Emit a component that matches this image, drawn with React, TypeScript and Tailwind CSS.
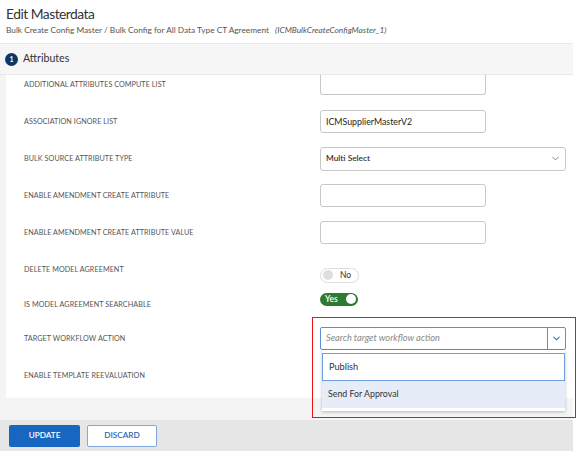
import { ChevronDown } from "lucide-react";

const FONT = "font-['Lato','Liberation_Sans',sans-serif]";

function TextBox({ value, clipTop }: { value?: string; clipTop?: boolean }) {
  return (
    <div
      className={
        "w-[166px] bg-white border border-[#c8c8c8] flex items-center px-[5px] text-[8.8px] text-[#222] " +
        (clipTop ? "h-[20px] border-t-0 rounded-b-[3px]" : "h-[23px] rounded-[3px]")
      }
    >
      {value}
    </div>
  );
}

function Toggle({ on }: { on: boolean }) {
  if (on) {
    return (
      <div className="w-[38px] h-[13px] rounded-full bg-[#2e7a32] flex items-center justify-between pl-[5px] pr-[2px]">
        <span className="text-[8.5px] leading-none text-white font-semibold">Yes</span>
        <span className="w-[10px] h-[10px] rounded-full bg-white" />
      </div>
    );
  }
  return (
    <div className="w-[39px] h-[15px] rounded-full bg-white border border-[#dcdcdc] flex items-center pl-[2px] gap-[7px]">
      <span className="w-[10px] h-[10px] rounded-full bg-[#dedede]" />
      <span className="text-[8.5px] leading-none text-[#333]">No</span>
    </div>
  );
}

function Row({
  label,
  h,
  align = "items-center",
  labelPad = "pt-[2px]",
  children,
}: {
  label: string;
  h: string;
  align?: string;
  labelPad?: string;
  children?: React.ReactNode;
}) {
  return (
    <div className={"flex " + align + " " + h}>
      <div className={"w-[314px] pl-[18px] text-[7.2px] text-[#555] uppercase tracking-[0.01em] " + labelPad}>
        {label}
      </div>
      <div className="flex-1 flex items-center">{children}</div>
    </div>
  );
}

export default function App() {
  return (
    <div className={"relative w-[585px] h-[451px] bg-white overflow-hidden " + FONT}>
      {/* Title */}
      <div className="px-[6px] pt-[4px] h-[43px]">
        <h1 className="text-[13.8px] leading-[19px] tracking-[-0.5px] text-[#333]">Edit Masterdata</h1>
        <p className="text-[8.3px] leading-[12px] text-[#555] mt-[1px]">
          Bulk Create Config Master / Bulk Config for All Data Type CT Agreement{" "}
          <span className="italic ml-[4px]">(ICMBulkCreateConfigMaster_1)</span>
        </p>
      </div>

      <div className="w-[573px] bg-[#f4f4f4]">
        {/* Section header */}
        <div className="h-[32px] bg-[#f6f6f6] border-y border-[#e8e8e8] flex items-center pl-[5px] gap-[5px]">
          <span className="w-[13px] h-[13px] rounded-full bg-[#0c3868] text-white text-[7px] font-bold flex items-center justify-center">
            1
          </span>
          <span className="text-[10.6px] text-[#333]">Attributes</span>
        </div>

        {/* Scrolled content */}
        <div className="ml-[6px] h-[323px] bg-white">
          <Row label="Additional Attributes Compute List" h="h-[28px]" align="items-start" labelPad="pt-[5px]">
            <TextBox clipTop />
          </Row>
          <Row label="Association Ignore List" h="h-[37px]">
            <TextBox value="ICMSupplierMasterV2" />
          </Row>
          <Row label="Bulk Source Attribute Type" h="h-[37px]">
            <div className="w-[246px] h-[24px] bg-white border border-[#c8c8c8] rounded-[3px] flex items-center justify-between pl-[5px] pr-[4px]">
              <span className="text-[8.3px] text-[#333] font-semibold">Multi Select</span>
              <ChevronDown className="w-[11px] h-[11px] text-[#777]" strokeWidth={2} />
            </div>
          </Row>
          <Row label="Enable Amendment Create Attribute" h="h-[37px]">
            <TextBox />
          </Row>
          <Row label="Enable Amendment Create Attribute Value" h="h-[37px]">
            <TextBox />
          </Row>
          <Row label="Delete Model Agreement" h="h-[36px]">
            <div className="mt-[12px]">
              <Toggle on={false} />
            </div>
          </Row>
          <Row label="Is Model Agreement Searchable" h="h-[34px]">
            <div className="mb-[10px]">
              <Toggle on />
            </div>
          </Row>
          <Row label="Target Workflow Action" h="h-[34px]">
            <div className="relative">
              <div className="w-[246px] h-[23px] bg-white border border-[#5d8fd8] rounded-[2px] flex items-center">
                <span className="flex-1 pl-[5px] text-[9.2px] italic text-[#888]">Search target workflow action</span>
                <span className="w-[18px] h-full border-l border-[#5d8fd8] flex items-center justify-center">
                  <ChevronDown className="w-[11px] h-[11px] text-[#3c6fb8]" strokeWidth={2.2} />
                </span>
              </div>
              <div className="absolute z-10 left-[2px] top-[23px] w-[243px] bg-white shadow-[0_1px_3px_rgba(0,0,0,0.25)] pt-[3px] pb-[3px]">
                <div className="h-[28px] border border-[#6f9edf] flex items-center pl-[6px] text-[9.2px] text-[#333]">
                  Publish
                </div>
                <div className="h-[27px] bg-[#e6edf8] flex items-center pl-[6px] text-[8.8px] text-[#333]">
                  Send For Approval
                </div>
              </div>
            </div>
          </Row>
          <Row label="Enable Template Reevaluation" h="h-[40px]" />
        </div>

        <div className="h-[22px]" />

        {/* Footer */}
        <div className="h-[31px] bg-[#e6e6e6] flex items-center pl-[9px] gap-[7px]">
          <button className="w-[71px] h-[22px] bg-[#1766c2] rounded-[2px] text-white text-[8.2px] font-semibold">
            UPDATE
          </button>
          <button className="w-[70px] h-[22px] bg-white border border-[#80a8de] rounded-[2px] text-[#2c63b3] text-[8.2px] font-semibold">
            DISCARD
          </button>
        </div>
      </div>

      {/* Annotation frame */}
      <div className="absolute left-[312px] top-[317px] w-[264px] h-[101px] border-[1.5px] border-[#e8141c] pointer-events-none z-20" />
    </div>
  );
}
